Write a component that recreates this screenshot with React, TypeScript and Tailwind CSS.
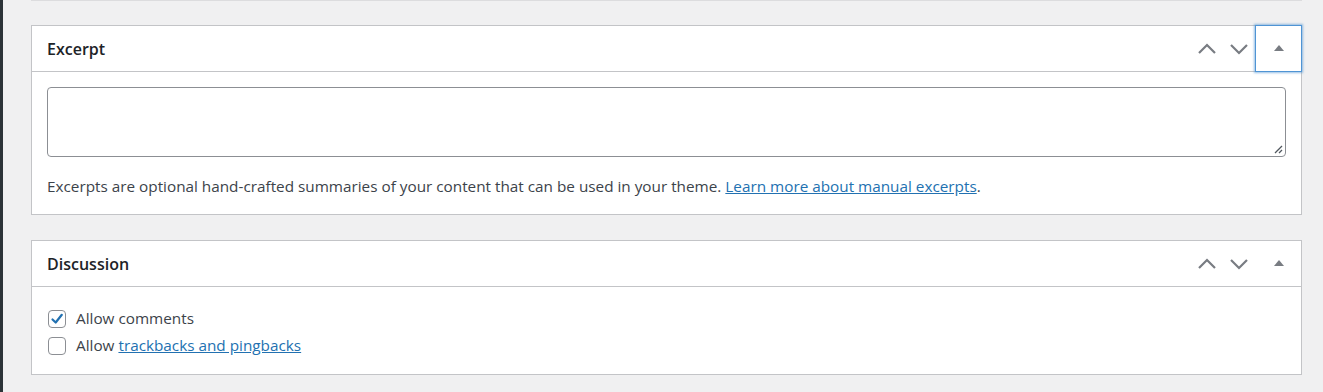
const font = { fontFamily: '"Open Sans", "Noto Sans", sans-serif' };

const UpIcon = () => (
  <svg width="20" height="12" viewBox="0 0 20 12" fill="none">
    <path d="M2 10 L10 2 L18 10" stroke="#787c82" strokeWidth="2.2" />
  </svg>
);

const DownIcon = () => (
  <svg width="20" height="12" viewBox="0 0 20 12" fill="none">
    <path d="M2 2 L10 10 L18 2" stroke="#787c82" strokeWidth="2.2" />
  </svg>
);

const TriangleIcon = () => (
  <svg width="10" height="6" viewBox="0 0 10 6">
    <path d="M0 6 L5 0 L10 6 Z" fill="#787c82" />
  </svg>
);

const BoxHeader = ({ title, focused }: { title: string; focused?: boolean }) => (
  <div className="flex h-[46px] items-center border-b border-[#c3c4c7]">
    <h2 className="flex-1 pl-[15px] text-[16px] font-semibold text-[#1d2327]">{title}</h2>
    <div className="flex h-full items-center">
      <button className="flex h-full w-[32px] items-center justify-center"><UpIcon /></button>
      <button className="flex h-full w-[32px] items-center justify-center"><DownIcon /></button>
      <button
        className={`-mr-px -mt-px flex h-[47px] w-[47px] items-center justify-center ${
          focused ? "border border-[#4f94d4] shadow-[0_0_2px_1px_rgba(79,148,212,0.6)]" : ""
        }`}
      >
        <TriangleIcon />
      </button>
    </div>
  </div>
);

const Checkbox = ({ checked }: { checked?: boolean }) => (
  <span className="flex h-[18px] w-[18px] items-center justify-center rounded-[4px] border border-[#8c8f94] bg-white">
    {checked && (
      <svg width="16" height="16" viewBox="0 0 16 16" fill="none">
        <path d="M3.5 8.5 L6.7 11.5 L12.8 3.8" stroke="#2271b1" strokeWidth="2.2" strokeLinecap="round" strokeLinejoin="round" />
      </svg>
    )}
  </span>
);

export default function App() {
  return (
    <div className="flex h-[392px] w-[1323px] bg-[#f0f0f1]" style={font}>
      <div className="w-[3px] bg-[#2c3338]" />
      <div className="flex-1 pl-[28px] pr-[21px]">
        <div className="h-px bg-[#dcdcde]" />
        <div className="mt-[24px] border border-[#c3c4c7] bg-white">
          <BoxHeader title="Excerpt" focused />
          <div className="px-[15px] pt-[15px] pb-[17px]">
            <div className="h-[70px] w-full rounded-[4px] border border-[#8c8f94] relative">
              <svg className="absolute right-[2px] bottom-[2px]" width="9" height="9" viewBox="0 0 9 9">
                <path d="M8 1 L1 8 M8 5 L5 8" stroke="#50575e" strokeWidth="1.3" />
              </svg>
            </div>
            <p className="mt-[18px] text-[15.3px] leading-[22px] text-[#3c434a]">
              Excerpts are optional hand-crafted summaries of your content that can be used in your theme.{" "}
              <a href="#" className="text-[#2271b1] underline">Learn more about manual excerpts</a>.
            </p>
          </div>
        </div>
        <div className="mt-[25px] border border-[#c3c4c7] bg-white">
          <BoxHeader title="Discussion" />
          <div className="px-[16px] pt-[18px] pb-[15px] text-[15.3px] text-[#3c434a]">
            <label className="flex h-[27px] items-center gap-[10px]">
              <Checkbox checked />
              <span>Allow comments</span>
            </label>
            <label className="flex h-[27px] items-center gap-[10px]">
              <Checkbox />
              <span>
                Allow <a href="#" className="text-[#2271b1] underline">trackbacks and pingbacks</a>
              </span>
            </label>
          </div>
        </div>
      </div>
    </div>
  );
}
